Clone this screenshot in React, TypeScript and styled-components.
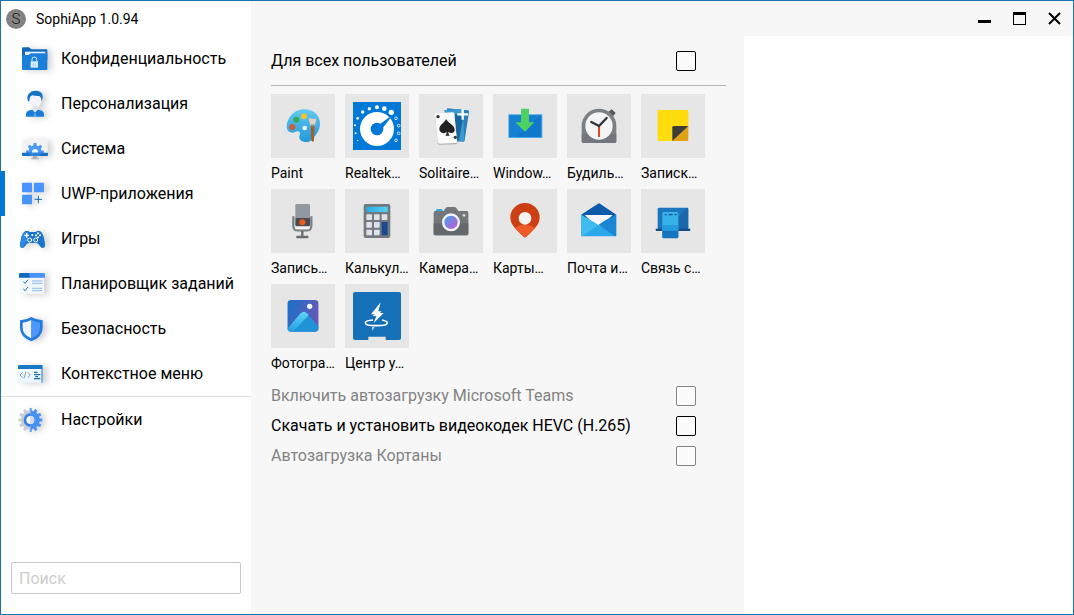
import React from 'react';
import styled, { createGlobalStyle } from 'styled-components';

const GlobalStyle = createGlobalStyle`
  *, *::before, *::after { box-sizing: border-box; }
  body {
    margin: 0;
    font-family: Roboto, "Noto Sans", sans-serif;
    font-size: 16px;
    line-height: 20px;
    color: #000;
  }
  button, input { font: inherit; color: inherit; }
  svg { display: block; flex: none; }
`;

const Window = styled.div`
  display: flex;
  min-height: 100vh;
  border: 1px solid #1a73ac;
  background: #fff;
`;

const Sidebar = styled.aside`
  display: flex;
  flex-direction: column;
  flex: 0 0 250px;
  background: #fff;
`;

const Brand = styled.header`
  display: flex;
  align-items: center;
  gap: 10px;
  height: 35px;
  padding-left: 5px;
  font-size: 14px;
`;

const Nav = styled.nav`
  display: flex;
  flex-direction: column;
`;

const NavItem = styled.button<{ $active?: boolean }>`
  display: flex;
  align-items: center;
  gap: 9px;
  height: 45px;
  padding: 0 0 0 15px;
  border: 0;
  background: none;
  text-align: left;
  white-space: nowrap;
  box-shadow: ${(p) => (p.$active ? 'inset 4px 0 0 #0078d4, -1px 0 0 #0078d4' : 'none')};
`;

const NavIcon = styled.svg.attrs({ viewBox: '0 0 108 135', 'aria-hidden': true })`
  width: 36px;
  height: 45px;
  overflow: visible;
  filter: drop-shadow(4px 1px 3px rgba(0, 0, 0, 0.18));
`;

const NavDivider = styled.hr`
  width: 100%;
  height: 1px;
  margin: 0;
  border: 0;
  background: #dedfe0;
`;

const Search = styled.input`
  height: 32px;
  margin: auto 10px 20px;
  padding: 0 7px;
  border: 1px solid #c8c8c8;
  border-radius: 2px;
  background: #fff;
  &::placeholder { color: #cdcdcd; opacity: 1; }
`;

const Main = styled.div`
  display: flex;
  flex-direction: column;
  flex: 1;
  min-width: 0;
  background: #f7f7f7;
`;

const TitleBar = styled.div`
  display: flex;
  justify-content: flex-end;
  height: 35px;
  padding-right: 1px;
`;

const WindowButton = styled.button`
  display: grid;
  place-items: center;
  width: 35px;
  padding: 0;
  border: 0;
  background: none;
`;

const Body = styled.div`
  display: flex;
  flex: 1;
`;

const Content = styled.main`
  flex: 0 0 493px;
  padding: 10px 18px 20px 20px;
`;

const Details = styled.aside`
  flex: 1;
  background: #fff;
`;

const OptionRow = styled.div<{ $muted?: boolean }>`
  display: flex;
  align-items: center;
  justify-content: space-between;
  height: 30px;
  padding-right: 30px;
  color: ${(p) => (p.$muted ? '#838383' : '#000')};
`;

const ScopeRow = styled(OptionRow)`
  margin-bottom: 9px;
`;

const CheckBox = styled.input.attrs({ type: 'checkbox' })`
  appearance: none;
  width: 20px;
  height: 20px;
  margin: 0;
  border: 1px solid currentColor;
  border-radius: 2px;
  background: #fbfbfb;
  &:checked { background: #0078d4; }
`;

const Rule = styled.hr`
  height: 1px;
  margin: 0 0 8px;
  border: 0;
  background: #b4b4b4;
`;

const AppGrid = styled.div`
  display: grid;
  grid-template-columns: repeat(auto-fill, 64px);
  column-gap: 10px;
  margin-bottom: 2px;
`;

const AppTile = styled.button`
  display: flex;
  flex-direction: column;
  height: 95px;
  padding: 0;
  border: 0;
  background: none;
  font-size: 14px;
  text-align: left;
`;

const AppIcon = styled.svg.attrs({ viewBox: '0 0 192 192', 'aria-hidden': true })`
  width: 64px;
  height: 64px;
  background: #e6e6e6;
`;

const AppName = styled.span`
  width: 100%;
  line-height: 30px;
  overflow: hidden;
  white-space: nowrap;
`;

const gearPath = (cx: number, cy: number, r: number, inner: number, teeth: number) => {
  const pts: string[] = [];
  for (let i = 0; i < teeth; i++) {
    const a = (i / teeth) * Math.PI * 2 - Math.PI / 2;
    const s = Math.PI / teeth;
    [[-0.62, inner], [-0.4, r], [0.4, r], [0.62, inner]].forEach(([k, rad]) => {
      pts.push(`${(cx + Math.cos(a + k * s) * rad).toFixed(1)} ${(cy + Math.sin(a + k * s) * rad).toFixed(1)}`);
    });
  }
  return `M${pts.join('L')}Z`;
};

const navItems = [
  {
    label: 'Конфиденциальность',
    icon: (
      <>
        <path d="M18 37q0-3 3-3h18l7 6h45q3 0 3 3v30H18z" fill="#1068bd" />
        <path d="M27 47h61v18H27z" fill="#e8f3fd" />
        <path d="M18 57h20l6-5h50v47q0 3-3 3H21q-3 0-3-3z" fill="#1a7fdb" />
        <path d="M48 77v-7q0-7 7-7t7 7v7" fill="none" stroke="#dcedfc" strokeWidth="3" />
        <path d="M44 76h22v19H44z" fill="#dcedfc" />
        <path d="M52 82v9M58 82v9" stroke="#80b8ee" strokeWidth="2" />
      </>
    ),
  },
  {
    label: 'Персонализация',
    icon: (
      <>
        <ellipse cx="57" cy="58" rx="19" ry="23" fill="#f4f5f8" />
        <path d="M50 76h14v14l-7 8-7-8z" fill="#dfe3ea" />
        <path d="M36 61q-5-14 2-22 8-11 22-10 20 1 20 18 0 8-3 14-1-14-8-16-10 1-20-2-9 2-9 18z" fill="#1673c4" />
        <path d="M30 107V98q1-10 19-12l8 9 8-9q18 2 19 12v9z" fill="#1b7cd6" />
        <path d="M57 94l6 13H51z" fill="#54a7f0" />
      </>
    ),
  },
  {
    label: 'Система',
    icon: (
      <>
        <defs>
          <clipPath id="screenArea"><path d="M18 41h78v40H18z" /></clipPath>
        </defs>
        <path d="M22 41h70q3 0 3 3v37H19V44q0-3 3-3z" fill="#f1f2f4" />
        <g clipPath="url(#screenArea)">
          <path d={gearPath(57, 78, 27, 20, 8)} fill="#4a97f5" />
          <circle cx="57" cy="78" r="9" fill="#eef5ff" />
        </g>
        <path d="M18 80h78v7q0 3-3 3H21q-3 0-3-3z" fill="#1672c9" />
        <path d="M36 80h42l-8 10H44z" fill="#2d84dc" />
        <path d="M50 90h14v7h5v3H45v-3h5z" fill="#adb1b6" />
      </>
    ),
  },
  {
    label: 'UWP-приложения',
    active: true,
    icon: (
      <>
        <rect x="18" y="35" width="30" height="29" rx="2" fill="#4894fe" />
        <rect x="54" y="35" width="30" height="29" rx="2" fill="#4894fe" />
        <rect x="18" y="71" width="30" height="29" rx="2" fill="#4894fe" />
        <path d="M67 74v23M56 85h22" stroke="#1669a8" strokeWidth="3" />
      </>
    ),
  },
  {
    label: 'Игры',
    icon: (
      <>
        <path d="M28 45h9l4 3h18l4-3h9q8 4 12 22 4 16 3 24-1 5-7 5-5 0-9-7-5-8-9-8H37q-4 0-9 8-4 7-9 7-6 0-7-5-1-8 3-24 5-18 13-22z" fill="#1b75cf" />
        <path d="M28 48h8v27q-10 3-15 18-6 2-7-4 0-36 14-41z" fill="#2e8be4" />
        <path d="M32 51v14M25 58h14" stroke="#fff" strokeWidth="4" />
        <circle cx="66" cy="52" r="3" fill="#fff" />
        <circle cx="66" cy="64" r="3" fill="#fff" />
        <circle cx="60" cy="58" r="3" fill="#fff" />
        <circle cx="72" cy="58" r="3" fill="#fff" />
        <circle cx="49" cy="57" r="3" fill="#fff" />
        <circle cx="41" cy="72" r="6" fill="#1b75cf" stroke="#fff" strokeWidth="3" />
        <circle cx="59" cy="72" r="6" fill="#1b75cf" stroke="#fff" strokeWidth="3" />
      </>
    ),
  },
  {
    label: 'Планировщик заданий',
    icon: (
      <>
        <path d="M12 50h72v49H12z" fill="#f2f7fc" />
        <path d="M13 36h31v14H9V40q0-4 4-4z" fill="#0f6abf" />
        <path d="M40 36h43q4 0 4 4v10H40z" fill="#4894fe" />
        <path d="M22 62l5 5 9-11M22 84l5 5 9-11" fill="none" stroke="#1f6db5" strokeWidth="3" />
        <path d="M48 60h31M48 67h31M48 82h31M48 89h31" stroke="#5c9ce0" strokeWidth="2" />
      </>
    ),
  },
  {
    label: 'Безопасность',
    icon: (
      <>
        <path d="M46 33q15 9 34 10v22q0 28-34 41Q12 93 12 65V43q19-1 34-10z" fill="#237be0" />
        <path d="M46 42q-13 7-26 8v15q0 21 26 32z" fill="#f2f7ff" />
        <path d="M46 42q13 7 26 8v15q0 21-26 32z" fill="#4d99fb" />
      </>
    ),
  },
  {
    label: 'Контекстное меню',
    icon: (
      <>
        <path d="M6 52h74v43H6z" fill="#eef6fd" />
        <path d="M9 42h68q3 0 3 3v9H6v-9q0-3 3-3z" fill="#1878c8" />
        <path d="M80 52v43h-4V54z" fill="#4d94dd" />
        <path d="M20 64l-8 8 8 8M35 64l8 8-8 8M30 62l-6 20" fill="none" stroke="#4478a8" strokeWidth="2" />
        <path d="M54 64h11M54 71h19M58 77h8M54 83h19" stroke="#176ab0" strokeWidth="4" />
      </>
    ),
  },
];

const settingsIcon = (
  <>
    <defs>
      <clipPath id="gearLeft"><path d="M0 30h43v80H0z" /></clipPath>
      <clipPath id="gearRight"><path d="M43 30h50v80H43z" /></clipPath>
    </defs>
    <path d={gearPath(43, 69, 36, 28, 12)} fill="#c9ccd1" clipPath="url(#gearLeft)" />
    <path d={gearPath(43, 69, 36, 28, 12)} fill="#4790f5" clipPath="url(#gearRight)" />
    <path d="M43 49a20 20 0 0 0 0 40z" fill="#2f7fe6" />
    <circle cx="43" cy="69" r="12" fill="#f4f6f9" />
    <path d="M43 57a12 12 0 0 1 0 24z" fill="#d3dae4" />
  </>
);

const apps = [
  {
    name: 'Paint',
    icon: (
      <>
        <defs>
          <linearGradient id="palette" x1="0" y1="0" x2="0" y2="1">
            <stop offset="0" stopColor="#62c9f2" /><stop offset="1" stopColor="#2399d8" />
          </linearGradient>
        </defs>
        <path d="M47 97c2-30 25-51 53-51 30 0 47 20 47 43 0 25-17 38-28 51-9 8-31 4-34-8-2-8 6-12 1-17-8-8-15 3-24 1-9-1-15-8-15-19z" fill="url(#palette)" />
        <circle cx="64" cy="99" r="9" fill="#d25a32" />
        <circle cx="76" cy="77" r="9" fill="#35a853" />
        <circle cx="99" cy="67" r="9" fill="#f3c32f" />
        <circle cx="101" cy="102" r="7" fill="#e7f7ff" />
        <path d="M113 74q6-3 11 0 6 3 12-2l-4 23h-14z" fill="#e2d4c2" />
        <path d="M119 91h12v6h-12z" fill="#8d97a0" />
        <path d="M119 97h12l-2 42q-4 9-8 0z" fill="#a3602c" />
      </>
    ),
  },
  {
    name: 'Realtek…',
    icon: (
      <>
        <path d="M24 24h144v144H24z" fill="#0078d7" />
        <circle cx="96" cy="105" r="51" fill="#fff" />
        <circle cx="96" cy="105" r="19" fill="#0078d7" />
        <path d="M102 92l31-22 3 3-23 29z" fill="#0078d7" />
        <g fill="#fff">
          <circle cx="38" cy="73" r="4" /><circle cx="53" cy="54" r="5" />
          <circle cx="73" cy="44" r="5" /><circle cx="96" cy="40" r="6" />
          <circle cx="118" cy="44" r="7" /><circle cx="139" cy="55" r="8" />
          <circle cx="30" cy="94" r="3" /><circle cx="32" cy="118" r="3" /><circle cx="38" cy="139" r="2" />
        </g>
        <g fill="none" stroke="#cfe6fa" strokeWidth="3">
          <circle cx="153" cy="73" r="4" /><circle cx="161" cy="95" r="4" />
          <circle cx="161" cy="118" r="4" /><circle cx="153" cy="139" r="4" />
        </g>
      </>
    ),
  },
  {
    name: 'Solitaire…',
    icon: (
      <>
        <path d="M84 43l63 6q4 1 3 5l-13 85q-1 5-6 4l-40-6z" fill="#2a7fb8" />
        <path d="M76 48l56-3 4 97-45 2z" fill="#3b9ad2" />
        <path d="M106 60l27 4-13 76-14-3z" fill="#1866a0" />
        <path d="M51 60l50-4q5 0 5 4l9 86q0 4-4 5l-50 1q-4 0-5-4l-8-83q-1-4 3-5z" fill="#a9adb2" />
        <path d="M51 58l50-3q4 0 5 4l8 84q0 4-4 4l-49 2q-4 0-5-4l-8-82q-1-4 3-5z" fill="#fafafa" />
        <path d="M81 75c6 11 23 17 26 30 2 12-11 16-19 8 0 6 2 10 5 12H79c3-3 4-7 4-12-7 8-21 5-22-7-1-13 15-19 20-31z" fill="#222" />
        <circle cx="57" cy="68" r="5" fill="#333" />
        <circle cx="109" cy="130" r="5" fill="#333" />
        <path d="M131 45v32M115 61h32" stroke="#fff" strokeWidth="7" />
      </>
    ),
  },
  {
    name: 'Window…',
    icon: (
      <>
        <path d="M46 61h102v71H46z" fill="#49a9e6" />
        <path d="M49 64h96v65H49z" fill="#0f78cb" />
        <path d="M49 64h96L70 129H49z" fill="#1b86d8" opacity=".5" />
        <path d="M84 44h24v41h16l-28 28-29-28h17z" fill="#4fd162" />
      </>
    ),
  },
  {
    name: 'Будиль…',
    icon: (
      <>
        <path d="M124 54l10-8 12 11-8 10z" fill="#54585d" />
        <path d="M44 96a52 52 0 0 1 104 0v46q0 5-5 5H49q-5 0-5-5z" fill="#7b8086" />
        <path d="M44 120h104v22q0 5-5 5H49q-5 0-5-5z" fill="#6d7278" opacity=".6" />
        <circle cx="96" cy="96" r="41" fill="#f3f4f6" />
        <path d="M96 96v33" stroke="#dc4a26" strokeWidth="6" />
        <path d="M73 84l23 12 23-24" fill="none" stroke="#303338" strokeWidth="7" strokeLinecap="round" strokeLinejoin="round" />
      </>
    ),
  },
  {
    name: 'Записк…',
    icon: (
      <>
        <path d="M54 48h84q4 0 4 4v48l-44 41H54q-4 0-4-4V52q0-4 4-4z" fill="#ffdc0e" />
        <path d="M142 96v41q0 4-4 4H94z" fill="#e0a112" />
        <path d="M98 96h44l-48 45v-41q0-4 4-4z" fill="#3d3c3b" />
      </>
    ),
  },
  {
    name: 'Запись…',
    icon: (
      <>
        <path d="M67 82v28q0 14 14 14h26q14 0 14-14V82" fill="none" stroke="#7d8288" strokeWidth="7" />
        <path d="M73 49q0-4 4-4h36q4 0 4 4v38H73z" fill="#9298a0" />
        <path d="M73 87h44v20q0 5-5 5H78q-5 0-5-5z" fill="#4b4d51" />
        <path d="M73 113h42v6q0 2-2 2H75q-2 0-2-2z" fill="#f3f3f3" />
        <circle cx="94" cy="100" r="9" fill="#ee5a1c" />
        <path d="M94 126v16M76 144h36" stroke="#666b70" strokeWidth="7" />
      </>
    ),
  },
  {
    name: 'Калькул…',
    icon: (
      <>
        <defs>
          <linearGradient id="display"><stop stopColor="#2ba9df" /><stop offset="1" stopColor="#54d6f4" /></linearGradient>
        </defs>
        <rect x="56" y="45" width="80" height="102" rx="6" fill="#73797f" />
        <rect x="64" y="53" width="64" height="16" rx="2" fill="url(#display)" />
        <g fill="#dfe3e9">
          {[64, 87, 110].map((x) => <rect key={x} x={x} y="76" width="17" height="17" rx="2" />)}
          {[64, 87].map((x) => <rect key={x} x={x} y="99" width="17" height="17" rx="2" />)}
          {[64, 87].map((x) => <rect key={x} x={x} y="122" width="17" height="17" rx="2" />)}
        </g>
        <rect x="110" y="99" width="18" height="40" rx="2" fill="#174a90" />
      </>
    ),
  },
  {
    name: 'Камера…',
    icon: (
      <>
        <defs>
          <linearGradient id="lens" x1="0" y1="0" x2="1" y2="1">
            <stop stopColor="#3ca6ee" /><stop offset=".55" stopColor="#8b77dd" /><stop offset="1" stopColor="#c45cd0" />
          </linearGradient>
        </defs>
        <path d="M50 67q0-7 7-7h8q7 0 7 7z" fill="#32a6df" />
        <path d="M49 66h25l6-9q2-3 6-3h20q4 0 6 3l6 9h25q5 0 5 5v63q0 5-5 5H49q-5 0-5-5V71q0-5 5-5z" fill="#73777c" />
        <path d="M44 103h104v31q0 5-5 5H49q-5 0-5-5z" fill="#64686c" />
        <circle cx="96" cy="100" r="27" fill="#f4f5fa" />
        <circle cx="96" cy="100" r="20" fill="url(#lens)" />
        <circle cx="135" cy="79" r="4" fill="#d9dbdd" />
      </>
    ),
  },
  {
    name: 'Карты…',
    icon: (
      <>
        <path d="M96 42a44 44 0 0 1 44 44c0 25-28 44-40 57q-4 4-8 0C80 130 52 111 52 86a44 44 0 0 1 44-44z" fill="#cb3f12" />
        <path d="M65 116q31-18 62 0-16 16-27 27-4 4-8 0-11-11-27-27z" fill="#ee5b28" />
        <circle cx="96" cy="88" r="19" fill="#f5f3f2" />
      </>
    ),
  },
  {
    name: 'Почта и…',
    icon: (
      <>
        <path d="M42 77l51-33q3-2 6 0l49 33-53 38z" fill="#0d59aa" />
        <path d="M53 78h84l-42 40z" fill="#f4f7fb" />
        <path d="M42 77l106 62q0 3-4 3H46q-4 0-4-4z" fill="#2ba8ea" />
        <path d="M148 77v61q0 4-4 4l-53-37z" fill="#1b87d4" />
        <path d="M42 77l52 31-48 34q-4 0-4-4z" fill="#40bbf0" />
        <path d="M56 78h80l-42 30z" fill="#f4f7fb" />
      </>
    ),
  },
  {
    name: 'Связь с…',
    icon: (
      <>
        <path d="M54 56h84q4 0 4 4v60H50V60q0-4 4-4z" fill="#1c75bd" />
        <path d="M142 60v60h-60l56-64q4 0 4 4z" fill="#155b9e" opacity=".5" />
        <path d="M44 119h104v4q0 3-3 3H47q-3 0-3-3z" fill="#124b86" />
        <rect x="64" y="69" width="48" height="78" rx="4" fill="#38b1ea" />
        <path d="M64 108h48v17H64z" fill="#249bdd" />
        <path d="M64 125h48v19q0 4-4 4H68q-4 0-4-4z" fill="#1574bd" />
        <path d="M71 77h6M83 77h12M101 77h6" stroke="#125a9d" strokeWidth="4" />
      </>
    ),
  },
  {
    name: 'Фотогра…',
    icon: (
      <>
        <defs>
          <linearGradient id="sky" x1="0" y1="0" x2="1" y2=".4">
            <stop stopColor="#1572c9" /><stop offset="1" stopColor="#6658b6" />
          </linearGradient>
          <linearGradient id="hill" x1="0" y1="0" x2="0" y2="1">
            <stop stopColor="#62d3f5" /><stop offset="1" stopColor="#209ee2" />
          </linearGradient>
          <clipPath id="photoFrame"><rect x="49" y="48" width="94" height="95" rx="12" /></clipPath>
        </defs>
        <g clipPath="url(#photoFrame)">
          <path d="M49 48h94v95H49z" fill="url(#sky)" />
          <path d="M95 98l48 44H60z" fill="#1783d0" />
          <path d="M49 134l40-46q9-9 19 0l6 6-48 50H49z" fill="url(#hill)" />
          <path d="M108 88l35 40v16H66l47-50z" fill="#1f93d8" />
        </g>
        <circle cx="116" cy="67" r="8" fill="#f5f9ff" />
      </>
    ),
  },
  {
    name: 'Центр у…',
    icon: (
      <>
        <path d="M30 24h132q6 0 6 6v132q0 6-6 6h-40v-10H70v10H30q-6 0-6-6V30q0-6 6-6z" fill="#1570b8" />
        <path d="M84 108q-23 2-23 8 0 9 33 9t33-9q0-5-16-8" fill="none" stroke="#fff" strokeWidth="5" />
        <path d="M107 55L78 91h13l-9 4 12 2-8 20 30-30h-13l8-4-11-2z" fill="#fff" />
        <path d="M81 128h9l-9 13z" fill="#a9cfec" />
      </>
    ),
  },
];

const options = [
  { id: 'teams', label: 'Включить автозагрузку Microsoft Teams', disabled: true },
  { id: 'hevc', label: 'Скачать и установить видеокодек HEVC (H.265)', disabled: false },
  { id: 'cortana', label: 'Автозагрузка Кортаны', disabled: true },
];

export default function App() {
  return (
    <>
      <GlobalStyle />
      <Window>
        <Sidebar>
          <Brand>
            <svg width="20" height="20" viewBox="0 0 20 20" aria-hidden="true">
              <circle cx="10" cy="10" r="10" fill="#858585" />
              <circle cx="10" cy="10" r="8" fill="none" stroke="#5f5f5f" strokeWidth="1" strokeDasharray="1 3" />
              <text x="10" y="15" textAnchor="middle" fontSize="15" fontWeight="300" fill="#111">S</text>
            </svg>
            <span>SophiApp 1.0.94</span>
          </Brand>
          <Nav>
            {navItems.map((item) => (
              <NavItem key={item.label} $active={item.active} aria-current={item.active ? 'page' : undefined}>
                <NavIcon>{item.icon}</NavIcon>
                {item.label}
              </NavItem>
            ))}
            <NavDivider />
            <NavItem>
              <NavIcon>{settingsIcon}</NavIcon>
              Настройки
            </NavItem>
          </Nav>
          <Search type="search" placeholder="Поиск" aria-label="Поиск" />
        </Sidebar>
        <Main>
          <TitleBar>
            <WindowButton aria-label="Свернуть">
              <svg width="13" height="13"><path d="M0 8h13v3H0z" /></svg>
            </WindowButton>
            <WindowButton aria-label="Развернуть">
              <svg width="13" height="13"><path fillRule="evenodd" d="M0 0h13v13H0zM1 3v9h11V3z" /></svg>
            </WindowButton>
            <WindowButton aria-label="Закрыть">
              <svg width="13" height="13"><path d="M1 1l11 11M12 1L1 12" stroke="#000" strokeWidth="2" /></svg>
            </WindowButton>
          </TitleBar>
          <Body>
            <Content>
              <ScopeRow>
                <label htmlFor="all-users">Для всех пользователей</label>
                <CheckBox id="all-users" />
              </ScopeRow>
              <Rule />
              <AppGrid>
                {apps.map((app) => (
                  <AppTile key={app.name}>
                    <AppIcon>{app.icon}</AppIcon>
                    <AppName>{app.name}</AppName>
                  </AppTile>
                ))}
              </AppGrid>
              {options.map((option) => (
                <OptionRow key={option.id} $muted={option.disabled}>
                  <label htmlFor={option.id}>{option.label}</label>
                  <CheckBox id={option.id} disabled={option.disabled} />
                </OptionRow>
              ))}
            </Content>
            <Details />
          </Body>
        </Main>
      </Window>
    </>
  );
}
